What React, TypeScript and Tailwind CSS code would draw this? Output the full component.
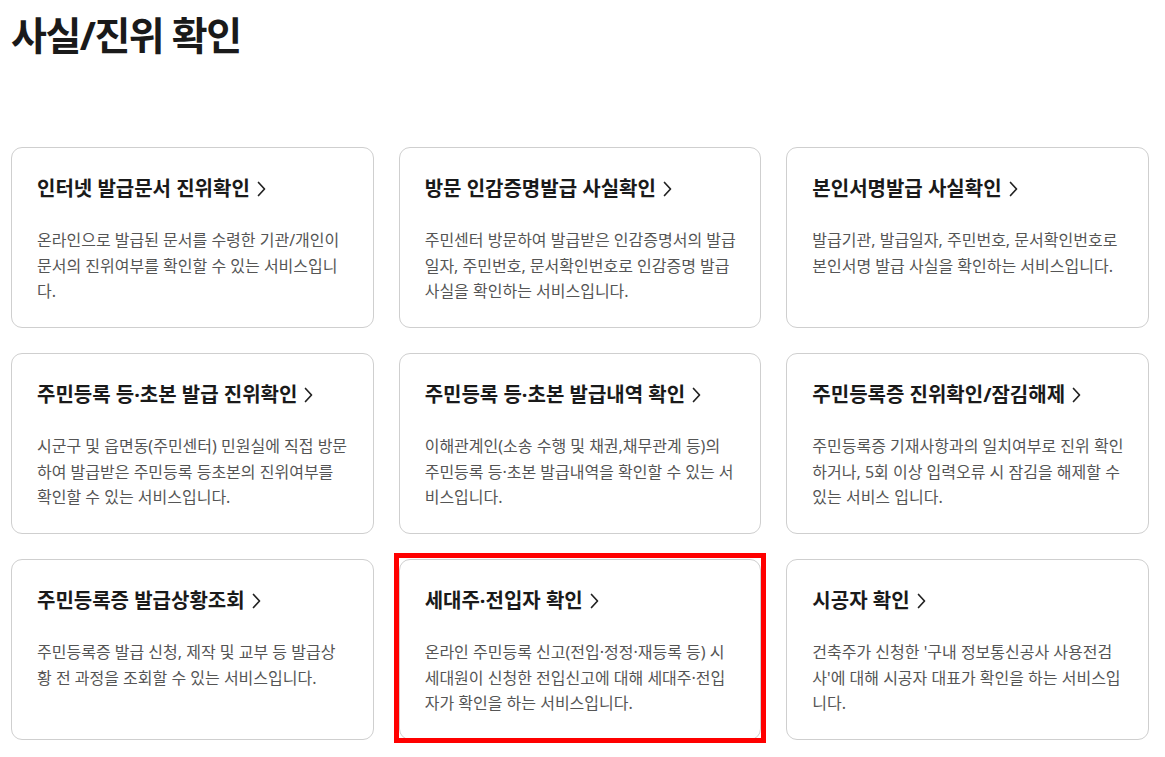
import React from 'react';

interface Service {
  title: string;
  desc: string;
  highlighted?: boolean;
}

const services: Service[] = [
  {
    title: '인터넷 발급문서 진위확인',
    desc: '온라인으로 발급된 문서를 수령한 기관/개인이 문서의 진위여부를 확인할 수 있는 서비스입니다.',
  },
  {
    title: '방문 인감증명발급 사실확인',
    desc: '주민센터 방문하여 발급받은 인감증명서의 발급일자, 주민번호, 문서확인번호로 인감증명 발급 사실을 확인하는 서비스입니다.',
  },
  {
    title: '본인서명발급 사실확인',
    desc: '발급기관, 발급일자, 주민번호, 문서확인번호로 본인서명 발급 사실을 확인하는 서비스입니다.',
  },
  {
    title: '주민등록 등·초본 발급 진위확인',
    desc: '시군구 및 읍면동(주민센터) 민원실에 직접 방문하여 발급받은 주민등록 등초본의 진위여부를 확인할 수 있는 서비스입니다.',
  },
  {
    title: '주민등록 등·초본 발급내역 확인',
    desc: '이해관계인(소송 수행 및 채권,채무관계 등)의 주민등록 등·초본 발급내역을 확인할 수 있는 서비스입니다.',
  },
  {
    title: '주민등록증 진위확인/잠김해제',
    desc: '주민등록증 기재사항과의 일치여부로 진위 확인하거나, 5회 이상 입력오류 시 잠김을 해제할 수 있는 서비스 입니다.',
  },
  {
    title: '주민등록증 발급상황조회',
    desc: '주민등록증 발급 신청, 제작 및 교부 등 발급상황 전 과정을 조회할 수 있는 서비스입니다.',
  },
  {
    title: '세대주·전입자 확인',
    desc: '온라인 주민등록 신고(전입·정정·재등록 등) 시 세대원이 신청한 전입신고에 대해 세대주·전입자가 확인을 하는 서비스입니다.',
    highlighted: true,
  },
  {
    title: '시공자 확인',
    desc: "건축주가 신청한 '구내 정보통신공사 사용전검사'에 대해 시공자 대표가 확인을 하는 서비스입니다.",
  },
];

const Chevron = () => (
  <svg width="9" height="16" viewBox="0 0 9 16" className="ml-[7px] shrink-0" fill="none">
    <polyline points="1.5,1.5 7.5,8 1.5,14.5" stroke="#222" strokeWidth="1.7" strokeLinecap="round" strokeLinejoin="round" />
  </svg>
);

const ServiceCard: React.FC<{ service: Service }> = ({ service }) => (
  <div className="relative">
    <a href="#" className="block h-[181px] rounded-[11px] border border-[#cfcfcf] bg-white pl-[25px] pr-[23px] pt-[27px]">
      <h3 className="flex items-center text-[20px] font-bold leading-[28px] text-[#1a1a1a]">
        <span>{service.title}</span>
        <Chevron />
      </h3>
      <p className="mt-[25px] text-[16px] leading-[25.5px] text-[#555]">{service.desc}</p>
    </a>
    {service.highlighted && (
      <div className="pointer-events-none absolute -left-[5px] -right-[5px] -top-[6px] -bottom-[3px] border-[5px] border-[#ff0000]" />
    )}
  </div>
);

export default function App() {
  return (
    <div
      className="min-h-[757px] bg-white pl-[11px] pr-[16px]"
      style={{ fontFamily: '"Noto Sans", "Noto Sans CJK KR", sans-serif' }}
    >
      <h1 className="pt-[10px] text-[39px] font-bold leading-[50px] tracking-[-1.5px] text-[#1a1a1a]">사실/진위 확인</h1>
      <div className="mt-[87px] grid grid-cols-3 gap-[25px]">
        {services.map((s) => (
          <ServiceCard key={s.title} service={s} />
        ))}
      </div>
    </div>
  );
}
